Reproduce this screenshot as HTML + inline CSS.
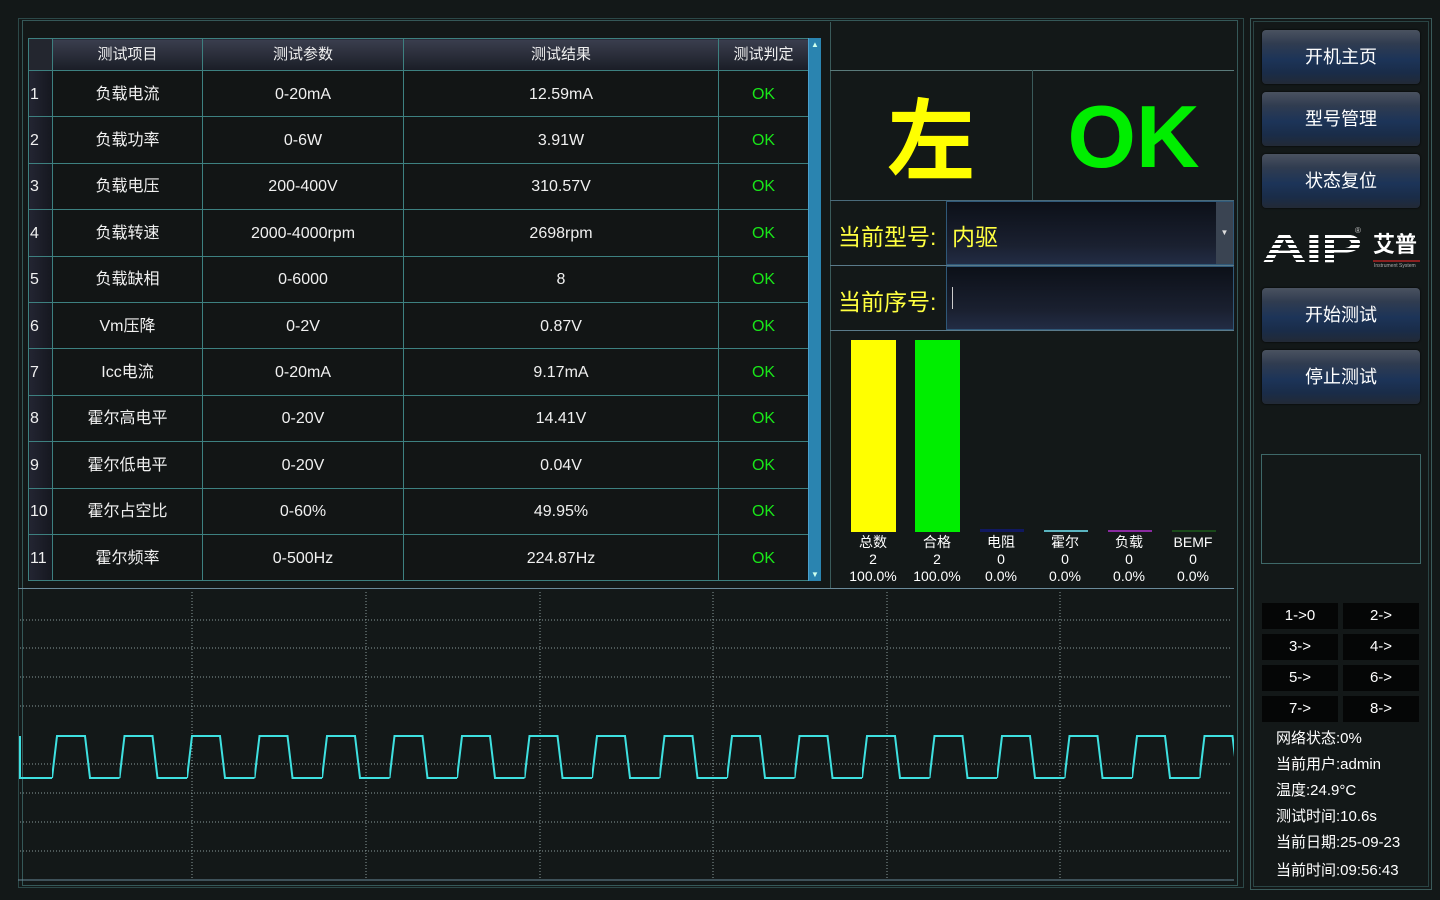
<!DOCTYPE html>
<html><head><meta charset="utf-8"><style>
*{margin:0;padding:0;box-sizing:border-box}
body{width:1440px;height:900px;background:#131818;position:relative;overflow:hidden;font-family:"Liberation Sans","Noto Sans CJK SC",sans-serif;color:#e8e8e8}
.a{position:absolute}
.box{position:absolute;border:1px solid #3f6a6a}
table{border-collapse:collapse;position:absolute;left:28px;top:38px;width:780px;table-layout:fixed}
td,th{border:1px solid #3d8080;text-align:center;font-size:16px;font-weight:normal;color:#f0f0f0;vertical-align:middle;line-height:20px}
th{height:32px;background:linear-gradient(#3a3e4e,#1a1d26);font-size:15px}
td{height:46.4px;background:#121515;padding-top:2px}
td.n{text-align:left;padding-left:1px;background:linear-gradient(90deg,#232532,#15171f)}
td.ok{color:#19e619}
.btn{position:absolute;left:1262px;width:158px;height:54px;border-radius:4px;background:linear-gradient(#4a5260 0%,#303c50 25%,#1c3458 55%,#1a2c48 80%,#222a36 100%);color:#fff;font-size:18px;text-align:center;line-height:54px;box-shadow:0 0 2px #000}
.sb{position:absolute;width:76px;height:26px;background:#050606;color:#fff;font-size:15px;text-align:center;line-height:26px}
.info{position:absolute;left:1276px;font-size:15px;color:#fff}
.lbl{position:absolute;width:60px;text-align:center;font-size:14px;line-height:17px;color:#fff}
</style></head><body>
<div class="box" style="left:18px;top:18px;width:1226px;height:870px;border-color:#2c4848"></div>
<div class="box" style="left:22px;top:20px;width:1216px;height:866px;border-color:#355858"></div>
<table>
<colgroup><col style="width:24px"><col style="width:150px"><col style="width:201px"><col style="width:315px"><col style="width:90px"></colgroup>
<tr><th style="background:#23262f"></th><th>测试项目</th><th>测试参数</th><th>测试结果</th><th>测试判定</th></tr>
<tr><td class="n">1</td><td>负载电流</td><td>0-20mA</td><td>12.59mA</td><td class="ok">OK</td></tr>
<tr><td class="n">2</td><td>负载功率</td><td>0-6W</td><td>3.91W</td><td class="ok">OK</td></tr>
<tr><td class="n">3</td><td>负载电压</td><td>200-400V</td><td>310.57V</td><td class="ok">OK</td></tr>
<tr><td class="n">4</td><td>负载转速</td><td>2000-4000rpm</td><td>2698rpm</td><td class="ok">OK</td></tr>
<tr><td class="n">5</td><td>负载缺相</td><td>0-6000</td><td>8</td><td class="ok">OK</td></tr>
<tr><td class="n">6</td><td>Vm压降</td><td>0-2V</td><td>0.87V</td><td class="ok">OK</td></tr>
<tr><td class="n">7</td><td>Icc电流</td><td>0-20mA</td><td>9.17mA</td><td class="ok">OK</td></tr>
<tr><td class="n">8</td><td>霍尔高电平</td><td>0-20V</td><td>14.41V</td><td class="ok">OK</td></tr>
<tr><td class="n">9</td><td>霍尔低电平</td><td>0-20V</td><td>0.04V</td><td class="ok">OK</td></tr>
<tr><td class="n">10</td><td>霍尔占空比</td><td>0-60%</td><td>49.95%</td><td class="ok">OK</td></tr>
<tr><td class="n">11</td><td>霍尔频率</td><td>0-500Hz</td><td>224.87Hz</td><td class="ok">OK</td></tr>
</table>
<div class="a" style="left:808px;top:38px;width:13px;height:543px;background:#2a84b0;border-left:1px solid #4aa0cc"></div>
<div class="a" style="left:811px;top:40px;color:#cfe;font-size:8px">▲</div>
<div class="a" style="left:811px;top:570px;color:#cfe;font-size:8px">▼</div>

<div class="a" style="left:830px;top:22px;width:1px;height:566px;background:#3a5a5a"></div>
<div class="a" style="left:830px;top:70px;width:404px;height:1px;background:#5a7a7a"></div>
<div class="a" style="left:1032px;top:70px;width:1px;height:130px;background:#3a5a5a"></div>
<div class="a" style="left:830px;top:200px;width:404px;height:1px;background:#4a6a7a"></div>
<div class="a" style="left:830px;top:70px;width:202px;height:130px;text-align:center;line-height:130px;font-size:88px;font-weight:bold;color:#ffff00;font-family:'Noto Sans CJK SC',sans-serif">左</div>
<div class="a" style="left:1033px;top:70px;width:201px;height:130px;text-align:center;line-height:134px;font-size:88px;font-weight:bold;color:#00ee00">OK</div>
<div class="a" style="left:946px;top:201px;width:288px;height:64px;background:linear-gradient(#0c1018,#1a2030 70%,#222c44);border:1px solid #2f5878"></div>
<div class="a" style="left:1216px;top:202px;width:17px;height:62px;background:#3a4452;color:#ddd;font-size:8px;text-align:center;line-height:62px">▼</div>
<div class="a" style="left:830px;top:265px;width:404px;height:1px;background:#5a7a8a"></div>
<div class="a" style="left:946px;top:266px;width:288px;height:64px;background:linear-gradient(#0c1018,#1a2030 70%,#222c44);border:1px solid #2f5878"></div>
<div class="a" style="left:830px;top:330px;width:404px;height:1px;background:#5a7a8a"></div>
<div class="a" style="left:838px;top:218px;font-size:23px;color:#ffff40">当前型号:</div>
<div class="a" style="left:952px;top:218px;font-size:23px;color:#ffff40">内驱</div>
<div class="a" style="left:838px;top:283px;font-size:23px;color:#ffff40">当前序号:</div>
<div class="a" style="left:952px;top:287px;width:1px;height:22px;background:#ccc"></div>

<div class="a" style="left:851px;top:340px;width:45px;height:192px;background:#ffff00"></div>
<div class="a" style="left:915px;top:340px;width:45px;height:192px;background:#00ee00"></div>
<div class="a" style="left:980px;top:529px;width:44px;height:3px;background:#101860"></div>
<div class="a" style="left:1044px;top:530px;width:44px;height:2px;background:#5ab4c0"></div>
<div class="a" style="left:1108px;top:530px;width:44px;height:2px;background:#8a2aa0"></div>
<div class="a" style="left:1172px;top:530px;width:44px;height:2px;background:#1a4a1a"></div>
<div class="lbl" style="left:843px;top:534px">总数<br>2<br>100.0%</div>
<div class="lbl" style="left:907px;top:534px">合格<br>2<br>100.0%</div>
<div class="lbl" style="left:971px;top:534px">电阻<br>0<br>0.0%</div>
<div class="lbl" style="left:1035px;top:534px">霍尔<br>0<br>0.0%</div>
<div class="lbl" style="left:1099px;top:534px">负载<br>0<br>0.0%</div>
<div class="lbl" style="left:1163px;top:534px">BEMF<br>0<br>0.0%</div>
<div class="a" style="left:18px;top:588px;width:1216px;height:1px;background:#6a8a9a"></div>

<svg class="a" style="left:0;top:0" width="1440" height="900">
<defs><pattern id="w" x="52" y="0" width="67.5" height="900" patternUnits="userSpaceOnUse">
<polyline points="0,778 5,736 33,736 38,778 67.5,778" fill="none" stroke="#3ee0e0" stroke-width="2"/></pattern></defs>
<g stroke="#8a9a9a" stroke-width="1" stroke-dasharray="1,2">
<line x1="20" x2="1232" y1="620" y2="620"/><line x1="20" x2="1232" y1="648" y2="648"/><line x1="20" x2="1232" y1="677" y2="677"/><line x1="20" x2="1232" y1="706" y2="706"/><line x1="20" x2="1232" y1="764" y2="764"/><line x1="20" x2="1232" y1="793" y2="793"/><line x1="20" x2="1232" y1="822" y2="822"/><line x1="20" x2="1232" y1="851" y2="851"/>
<line x1="192" x2="192" y1="592" y2="880"/><line x1="366" x2="366" y1="592" y2="880"/><line x1="540" x2="540" y1="592" y2="880"/><line x1="713" x2="713" y1="592" y2="880"/><line x1="887" x2="887" y1="592" y2="880"/><line x1="1060" x2="1060" y1="592" y2="880"/>
</g>
<rect x="52" y="730" width="1182" height="55" fill="url(#w)"/>
<polyline points="20,736 20,778 52,778" fill="none" stroke="#3ee0e0" stroke-width="2"/>
<line x1="18" x2="1234" y1="880" y2="880" stroke="#6a8a9a"/>
</svg>

<div class="box" style="left:1250px;top:18px;width:182px;height:872px;border-color:#3a5a5a"></div>
<div class="box" style="left:1253px;top:21px;width:176px;height:866px;border-color:#2a4444"></div>
<div class="btn" style="top:30px">开机主页</div>
<div class="btn" style="top:92px">型号管理</div>
<div class="btn" style="top:154px">状态复位</div>
<div class="a" style="left:1262px;top:230px;font-size:40px;font-weight:900;color:#fff;line-height:38px;transform:scaleX(1.55);transform-origin:left;letter-spacing:-1px;background:repeating-linear-gradient(transparent 0 3px,#131818 3px 5px);">AIP</div>
<div class="a" style="left:1262px;top:230px;width:100px;height:38px;background:repeating-linear-gradient(transparent 0 3px,#131818 3px 5px)"></div>
<div class="a" style="left:1355px;top:226px;font-size:8px;color:#ccc">®</div>
<div class="a" style="left:1373px;top:232px;font-size:22px;font-weight:bold;color:#fff;line-height:26px">艾普</div>
<div class="a" style="left:1373px;top:260px;width:47px;height:2px;background:#8a2020"></div>
<div class="a" style="left:1374px;top:263px;font-size:5px;color:#aaa">Instrument System</div>
<div class="btn" style="top:288px">开始测试</div>
<div class="btn" style="top:350px">停止测试</div>
<div class="box" style="left:1261px;top:454px;width:160px;height:110px;border-color:#3e6868"></div>
<div class="sb" style="left:1262px;top:603px">1-&gt;0</div><div class="sb" style="left:1343px;top:603px">2-&gt;</div>
<div class="sb" style="left:1262px;top:634px">3-&gt;</div><div class="sb" style="left:1343px;top:634px">4-&gt;</div>
<div class="sb" style="left:1262px;top:665px">5-&gt;</div><div class="sb" style="left:1343px;top:665px">6-&gt;</div>
<div class="sb" style="left:1262px;top:696px">7-&gt;</div><div class="sb" style="left:1343px;top:696px">8-&gt;</div>
<div class="info" style="top:727px">网络状态:0%</div>
<div class="info" style="top:753px">当前用户:admin</div>
<div class="info" style="top:779px">温度:24.9°C</div>
<div class="info" style="top:805px">测试时间:10.6s</div>
<div class="info" style="top:831px">当前日期:25-09-23</div>
<div class="info" style="top:859px">当前时间:09:56:43</div>
</body></html>
